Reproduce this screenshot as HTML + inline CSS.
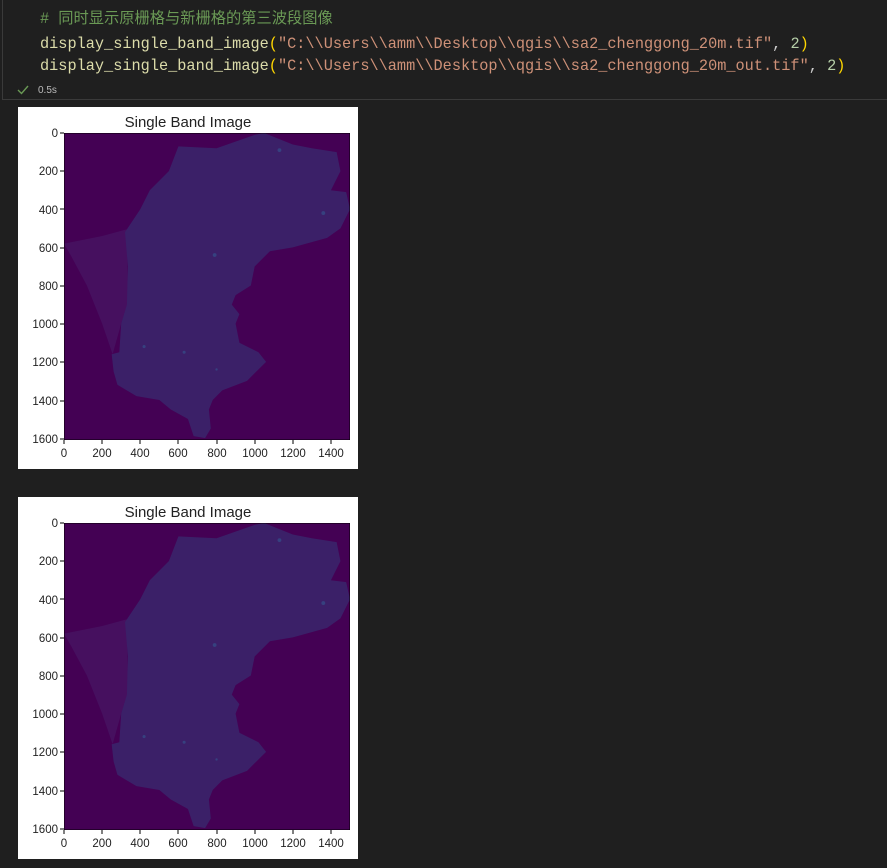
<!DOCTYPE html>
<html><head><meta charset="utf-8"><style>
body{margin:0;background:#1f1f1f;width:887px;height:868px;overflow:hidden;position:relative;font-family:"Liberation Sans",sans-serif}
.cell{position:absolute;left:2px;top:-1px;width:890px;height:101px;border:1px solid #3a3a3a;border-top:none;box-sizing:border-box;background:#1f1f1f}
.code{position:absolute;left:40px;font-family:"Liberation Mono","Noto Sans CJK SC",monospace;font-size:15.25px;white-space:pre;line-height:22px}
.c{color:#6a9955}.f{color:#dcdcaa}.p{color:#ffd700}.s{color:#ce9178}.n{color:#b5cea8}.t{color:#cccccc}
.fig{position:absolute;left:18px;width:340px;height:362px;background:#fff}
.fig svg{position:absolute;left:0;top:0}
</style></head><body>
<div class="cell"></div>
<div class="code" style="top:8px"><span class="c"># 同时显示原栅格与新栅格的第三波段图像</span></div>
<div class="code" style="top:33px"><span class="f">display_single_band_image</span><span class="p">(</span><span class="s">"C:\\Users\\amm\\Desktop\\qgis\\sa2_chenggong_20m.tif"</span><span class="t">, </span><span class="n">2</span><span class="p">)</span></div>
<div class="code" style="top:55px"><span class="f">display_single_band_image</span><span class="p">(</span><span class="s">"C:\\Users\\amm\\Desktop\\qgis\\sa2_chenggong_20m_out.tif"</span><span class="t">, </span><span class="n">2</span><span class="p">)</span></div>
<svg style="position:absolute;left:16px;top:84px" width="14" height="12"><path d="M2 6 L5.5 9.5 L12 2" stroke="#6a9955" stroke-width="1.4" fill="none"/></svg>
<div style="position:absolute;left:38px;top:85px;font-size:10px;color:#bbb">0.5s</div>

<div class="fig" style="top:107px"><svg width="340" height="362" viewBox="0 0 340 362">
<g id="ax">
<text x="170" y="20" font-size="15" text-anchor="middle" fill="#222" font-family="Liberation Sans,sans-serif">Single Band Image</text>
<svg x="46" y="26" width="286" height="307" viewBox="0 0 1500 1610" preserveAspectRatio="none">
<rect width="1500" height="1610" fill="#440154"/>
<path d="M0 580 L200 540 L330 505 L335 900 L300 1000 L255 1160 L200 1000 L120 800 L40 650 Z" fill="#46105f"/>
<path d="M600 70 L800 80 L1000 10 L1050 0 L1200 60 L1300 80 L1430 100 L1450 200 L1400 300 L1480 310 L1500 400 L1450 500 L1380 550 L1200 600 L1080 620 L1000 700 L980 800 L900 850 L880 900 L920 950 L900 1000 L920 1100 L1020 1150 L1060 1200 L960 1300 L830 1350 L780 1400 L760 1450 L770 1550 L740 1600 L680 1590 L650 1500 L560 1450 L500 1400 L380 1380 L280 1320 L260 1250 L250 1160 L290 1150 L300 1000 L330 900 L335 700 L320 520 L400 400 L450 300 L550 200 Z" fill="#3b2068"/>
<g fill="#35508a" opacity="0.7"><circle cx="790" cy="640" r="10"/><circle cx="1130" cy="90" r="10"/><circle cx="420" cy="1120" r="8"/><circle cx="630" cy="1150" r="8"/><circle cx="1360" cy="420" r="10"/><circle cx="800" cy="1240" r="6"/></g>
<rect width="1500" height="1610" fill="none" stroke="#000" stroke-width="5"/>
</svg>
<g font-size="11.5" fill="#222" text-anchor="end" font-family="Liberation Sans,sans-serif">
<text x="40" y="30">0</text><text x="40" y="68">200</text><text x="40" y="107">400</text><text x="40" y="145">600</text><text x="40" y="183">800</text><text x="40" y="221">1000</text><text x="40" y="259">1200</text><text x="40" y="298">1400</text><text x="40" y="336">1600</text>
</g>
<g stroke="#000" stroke-width="1"><path d="M42 26H46M42 64H46M42 102H46M42 141H46M42 179H46M42 217H46M42 255H46M42 294H46M42 332H46"/>
<path d="M46 333V337M84 333V337M122 333V337M160 333V337M199 333V337M237 333V337M275 333V337M313 333V337"/></g>
<g font-size="11.5" fill="#222" text-anchor="middle" font-family="Liberation Sans,sans-serif">
<text x="46" y="350">0</text><text x="84" y="350">200</text><text x="122" y="350">400</text><text x="160" y="350">600</text><text x="199" y="350">800</text><text x="237" y="350">1000</text><text x="275" y="350">1200</text><text x="313" y="350">1400</text>
</g>
</g></svg></div>

<div class="fig" style="top:497px"><svg width="340" height="362" viewBox="0 0 340 362"><use href="#ax"/></svg></div>
</body></html>
